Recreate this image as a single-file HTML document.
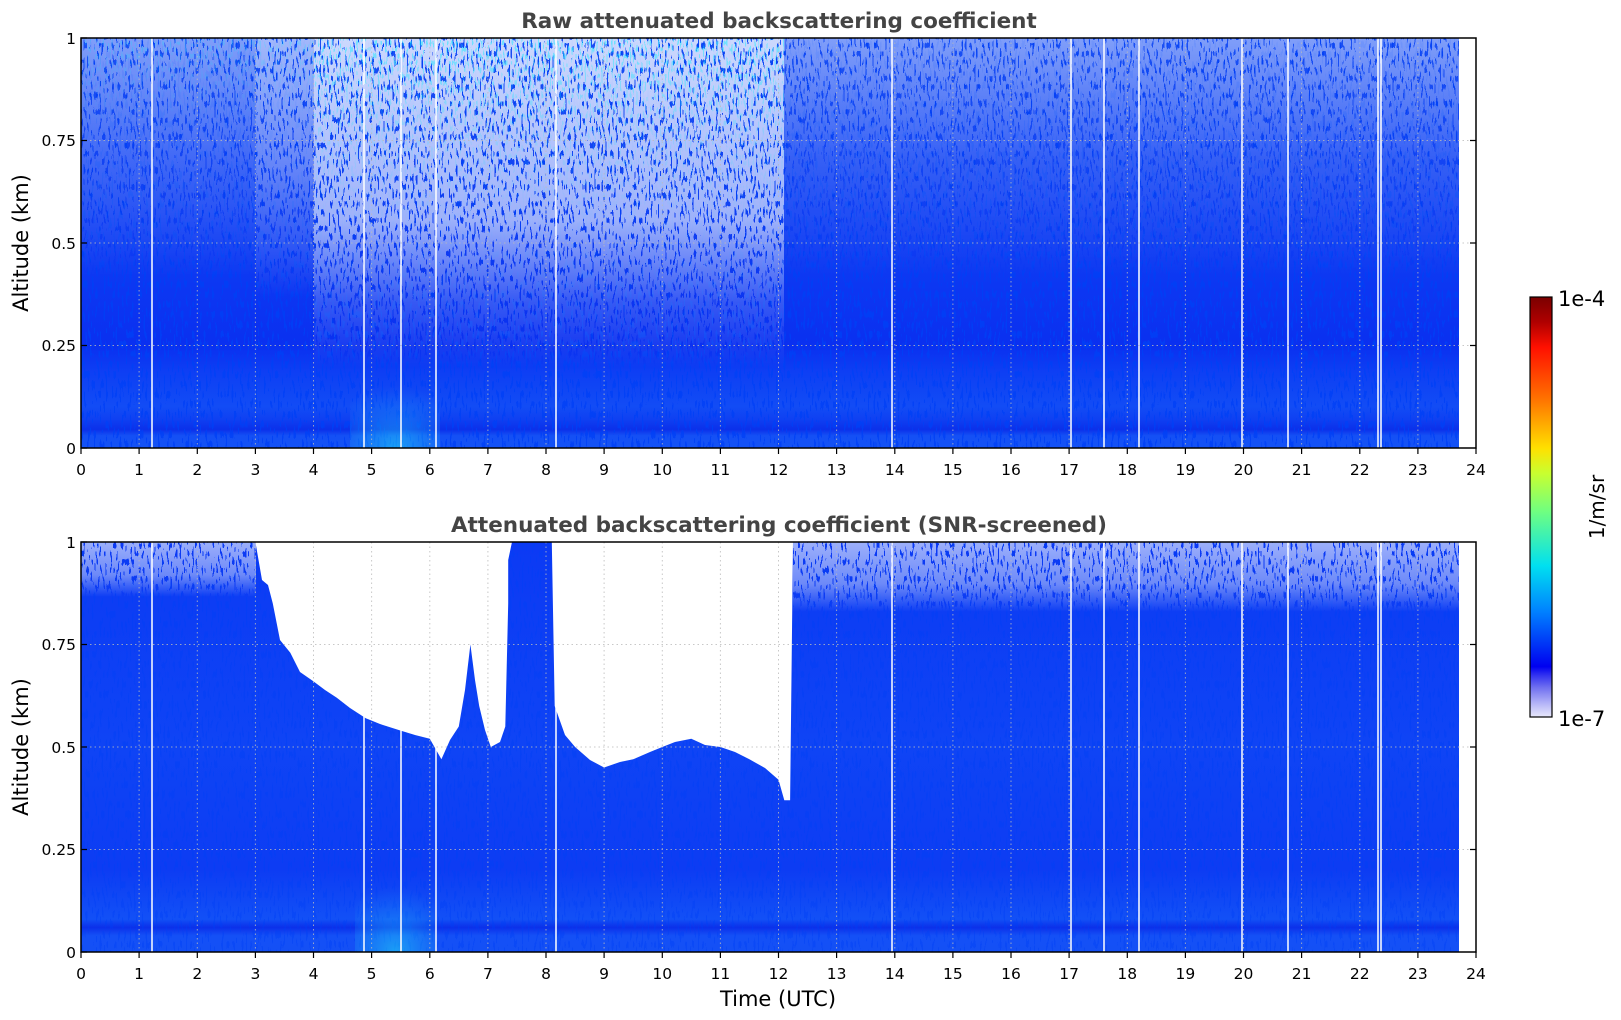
<!DOCTYPE html>
<html><head><meta charset="utf-8"><style>html,body{margin:0;padding:0;background:#fff;width:1621px;height:1020px;overflow:hidden}</style></head><body>
<svg width="1621" height="1020" viewBox="0 0 1621 1020" xmlns="http://www.w3.org/2000/svg" font-family="'DejaVu Sans','Liberation Sans',sans-serif">
<defs>
<filter id="n" x="0" y="0" width="100%" height="100%" filterUnits="objectBoundingBox">
<feTurbulence type="fractalNoise" baseFrequency="0.55 0.12" numOctaves="1" seed="7"/>
<feColorMatrix type="matrix" values="0 0 0 0 1  0 0 0 0 1  0 0 0 0 1  1 0 0 0 0"/>
<feComponentTransfer><feFuncA type="discrete" tableValues="0 0 1 1 1"/></feComponentTransfer>
</filter>
<filter id="n2" x="0" y="0" width="100%" height="100%" filterUnits="objectBoundingBox">
<feTurbulence type="fractalNoise" baseFrequency="0.6 0.15" numOctaves="1" seed="3"/>
<feColorMatrix type="matrix" values="0 0 0 0 0  0 0 0 0 0.85  0 0 0 0 1  1 0 0 0 0"/>
<feComponentTransfer><feFuncA type="discrete" tableValues="0 0 0 1 1"/></feComponentTransfer>
</filter>
<filter id="n3" x="0" y="0" width="100%" height="100%" filterUnits="objectBoundingBox">
<feTurbulence type="fractalNoise" baseFrequency="0.5 0.1" numOctaves="1" seed="11"/>
<feColorMatrix type="matrix" values="0 0 0 0 0  0 0 0 0 0.05  0 0 0 0 0.92  1 0 0 0 0"/>
<feComponentTransfer><feFuncA type="discrete" tableValues="0 0 0 0.8 0.8"/></feComponentTransfer>
</filter>
<linearGradient id="baseT" x1="0" y1="0" x2="0" y2="1">
<stop offset="0" stop-color="#1a50f4"/><stop offset="0.5" stop-color="#0e3cf3"/><stop offset="0.75" stop-color="#0a30f0"/><stop offset="0.82" stop-color="#0e40f4"/><stop offset="0.9" stop-color="#124cf5"/><stop offset="0.93" stop-color="#0f40f2"/><stop offset="0.955" stop-color="#0b30ea"/><stop offset="0.97" stop-color="#1450f5"/><stop offset="1" stop-color="#1452f5"/>
</linearGradient>
<linearGradient id="baseB" x1="0" y1="0" x2="0" y2="1">
<stop offset="0" stop-color="#0c3af4"/><stop offset="0.5" stop-color="#0f44f5"/><stop offset="0.8" stop-color="#0d3cf3"/><stop offset="0.92" stop-color="#1250f6"/><stop offset="0.94" stop-color="#0b30ea"/><stop offset="0.96" stop-color="#1450f6"/><stop offset="1" stop-color="#1450f5"/>
</linearGradient>
<linearGradient id="g1" x1="0" y1="0" x2="0" y2="1"><stop offset="0" stop-color="#fff" stop-opacity="0.45"/><stop offset="0.5" stop-color="#fff" stop-opacity="0.2"/><stop offset="1" stop-color="#fff" stop-opacity="0"/></linearGradient>
<linearGradient id="g1b" x1="0" y1="0" x2="0" y2="1"><stop offset="0" stop-color="#fff" stop-opacity="0.6"/><stop offset="0.5" stop-color="#fff" stop-opacity="0.35"/><stop offset="1" stop-color="#fff" stop-opacity="0"/></linearGradient>
<linearGradient id="g2" x1="0" y1="0" x2="0" y2="1"><stop offset="0" stop-color="#fff" stop-opacity="0.78"/><stop offset="0.55" stop-color="#fff" stop-opacity="0.6"/><stop offset="0.8" stop-color="#fff" stop-opacity="0.18"/><stop offset="1" stop-color="#fff" stop-opacity="0"/></linearGradient>
<linearGradient id="g3" x1="0" y1="0" x2="0" y2="1"><stop offset="0" stop-color="#fff" stop-opacity="0.45"/><stop offset="0.5" stop-color="#fff" stop-opacity="0.15"/><stop offset="1" stop-color="#fff" stop-opacity="0"/></linearGradient>
<mask id="m1" maskUnits="userSpaceOnUse" x="0" y="0" width="1621" height="1020">
<rect x="81" y="38" width="175" height="240" fill="url(#g1)"/>
<rect x="256" y="38" width="58" height="260" fill="url(#g1b)"/>
<rect x="314" y="38" width="470" height="330" fill="url(#g2)"/>
<rect x="784" y="38" width="675" height="240" fill="url(#g3)"/>
</mask>
<mask id="mcy" maskUnits="userSpaceOnUse" x="0" y="0" width="1621" height="1020">
<rect x="314" y="38" width="470" height="200" fill="url(#g3)"/>
<rect x="81" y="38" width="233" height="100" fill="url(#g3)" opacity="0.5"/>
</mask>
<linearGradient id="bt" x1="0" y1="0" x2="0" y2="1"><stop offset="0" stop-color="#fff" stop-opacity="0.6"/><stop offset="0.6" stop-color="#fff" stop-opacity="0.4"/><stop offset="1" stop-color="#fff" stop-opacity="0"/></linearGradient>
<mask id="m3" maskUnits="userSpaceOnUse" x="0" y="0" width="1621" height="1020">
<rect x="81" y="542" width="175" height="55" fill="url(#bt)"/>
<rect x="793" y="542" width="666" height="70" fill="url(#bt)"/>
</mask>
<radialGradient id="cy" cx="0.5" cy="1" r="0.8"><stop offset="0" stop-color="#20e0f8" stop-opacity="0.55"/><stop offset="1" stop-color="#20a0f8" stop-opacity="0"/></radialGradient>
<linearGradient id="cb" x1="0" y1="0" x2="0" y2="1">
<stop offset="0" stop-color="#7a0000"/><stop offset="0.06" stop-color="#b00000"/><stop offset="0.12" stop-color="#ff1000"/><stop offset="0.24" stop-color="#ff7000"/><stop offset="0.36" stop-color="#ffe000"/><stop offset="0.42" stop-color="#c8ff30"/><stop offset="0.51" stop-color="#70ff80"/><stop offset="0.64" stop-color="#00e0f0"/><stop offset="0.75" stop-color="#0080ff"/><stop offset="0.88" stop-color="#0000f0"/><stop offset="0.9" stop-color="#3030f0"/><stop offset="0.93" stop-color="#7070f0"/><stop offset="0.97" stop-color="#b8b8f8"/><stop offset="1" stop-color="#e8e8fa"/>
</linearGradient>
</defs>

<!-- TOP PLOT -->
<text x="779" y="28" text-anchor="middle" font-size="21.5" font-weight="bold" fill="#444">Raw attenuated backscattering coefficient</text>
<rect x="81" y="38" width="1378" height="410" fill="url(#baseT)"/>
<rect x="81" y="38" width="1378" height="410" fill="#fff" filter="url(#n3)"/>
<rect x="350" y="370" width="90" height="78" fill="url(#cy)"/>
<rect x="81" y="38" width="1378" height="330" fill="#fff" filter="url(#n)" mask="url(#m1)"/>
<rect x="81" y="38" width="1378" height="200" fill="#fff" filter="url(#n2)" mask="url(#mcy)"/>
<g stroke="#fff" stroke-width="1.5">
<line x1="152" y1="38" x2="152" y2="448"/><line x1="364" y1="38" x2="364" y2="448"/><line x1="401" y1="38" x2="401" y2="448"/><line x1="436" y1="38" x2="436" y2="448"/><line x1="556" y1="38" x2="556" y2="448"/><line x1="892" y1="38" x2="892" y2="448"/><line x1="1071" y1="38" x2="1071" y2="448"/><line x1="1104" y1="38" x2="1104" y2="448"/><line x1="1139" y1="38" x2="1139" y2="448"/><line x1="1242" y1="38" x2="1242" y2="448"/><line x1="1288" y1="38" x2="1288" y2="448"/><line x1="1378" y1="38" x2="1378" y2="448"/><line x1="1381" y1="38" x2="1381" y2="448"/>
</g>
<g stroke="#bbb" stroke-width="1" stroke-dasharray="1.5,3" opacity="0.8">
<line x1="81" y1="140.5" x2="1476" y2="140.5"/><line x1="81" y1="243" x2="1476" y2="243"/><line x1="81" y1="345.5" x2="1476" y2="345.5"/>
<path d="M139.1 38V448M197.3 38V448M255.4 38V448M313.5 38V448M371.6 38V448M429.8 38V448M487.9 38V448M546 38V448M604.1 38V448M662.3 38V448M720.4 38V448M778.5 38V448M836.6 38V448M894.8 38V448M952.9 38V448M1011 38V448M1069.1 38V448M1127.3 38V448M1185.4 38V448M1243.5 38V448M1301.6 38V448M1359.8 38V448M1417.9 38V448"/>
</g>
<rect x="81" y="38" width="1395" height="410" fill="none" stroke="#000" stroke-width="1.5"/>
<g stroke="#000" stroke-width="1.2">
<path d="M81 448v6M139.1 448v6M197.3 448v6M255.4 448v6M313.5 448v6M371.6 448v6M429.8 448v6M487.9 448v6M546 448v6M604.1 448v6M662.3 448v6M720.4 448v6M778.5 448v6M836.6 448v6M894.8 448v6M952.9 448v6M1011 448v6M1069.1 448v6M1127.3 448v6M1185.4 448v6M1243.5 448v6M1301.6 448v6M1359.8 448v6M1417.9 448v6M1476 448v6"/>
<path d="M81 38h6M81 140.5h6M81 243h6M81 345.5h6M81 448h6M1476 140.5h-6M1476 243h-6M1476 345.5h-6"/>
</g>
<g font-size="15.5" fill="#000" text-anchor="end">
<text x="76" y="44">1</text><text x="76" y="146">0.75</text><text x="76" y="249">0.5</text><text x="76" y="351">0.25</text><text x="76" y="454">0</text>
</g>
<g font-size="15.5" fill="#000" text-anchor="middle">
<text x="81" y="475">0</text><text x="139.1" y="475">1</text><text x="197.3" y="475">2</text><text x="255.4" y="475">3</text><text x="313.5" y="475">4</text><text x="371.6" y="475">5</text><text x="429.8" y="475">6</text><text x="487.9" y="475">7</text><text x="546" y="475">8</text><text x="604.1" y="475">9</text><text x="662.3" y="475">10</text><text x="720.4" y="475">11</text><text x="778.5" y="475">12</text><text x="836.6" y="475">13</text><text x="894.8" y="475">14</text><text x="952.9" y="475">15</text><text x="1011" y="475">16</text><text x="1069.1" y="475">17</text><text x="1127.3" y="475">18</text><text x="1185.4" y="475">19</text><text x="1243.5" y="475">20</text><text x="1301.6" y="475">21</text><text x="1359.8" y="475">22</text><text x="1417.9" y="475">23</text><text x="1476" y="475">24</text>
</g>
<text transform="translate(28,243) rotate(-90)" text-anchor="middle" font-size="21" fill="#000">Altitude (km)</text>

<!-- BOTTOM PLOT -->
<text x="779" y="532" text-anchor="middle" font-size="21.5" font-weight="bold" fill="#444">Attenuated backscattering coefficient (SNR-screened)</text>
<rect x="81" y="542" width="1378" height="410" fill="url(#baseB)"/>
<rect x="81" y="542" width="1378" height="410" fill="#fff" filter="url(#n3)" opacity="0.5"/>
<rect x="355" y="870" width="80" height="82" fill="url(#cy)"/>
<rect x="81" y="542" width="1378" height="70" fill="#fff" filter="url(#n)" mask="url(#m3)"/>
<path fill="#fff" d="M255.4 542L262 580L268 585L272.8 603.5L280 640L290.3 652.7L300 672L313.5 681.4L325 690L336.8 697.8L350 708L365.8 718.3L380 724L400.7 730.6L415 735L429.8 738.8L441.4 759.3L450 740L458.8 726.5L465 690L470.4 644.5L475 680L479.2 706L485 730L490.8 747L500 742L505.3 726.5L508.2 603.5L508.2 560L512 542Z"/>
<path fill="#fff" d="M551.8 542L554.7 706L565 735L575.1 747L590 760L604.1 767.5L620 762L633.2 759.3L650 752L662.3 747L675 742L691.3 738.8L705 745L720.4 747L735 752L749.4 759.3L765 768L778.5 779.8L784.3 800.3L790.1 800.3L793 542Z"/>
<rect x="1459" y="542" width="17" height="410" fill="#fff"/>
<g stroke="#fff" stroke-width="1.5">
<line x1="152" y1="542" x2="152" y2="952"/><line x1="364" y1="542" x2="364" y2="952"/><line x1="401" y1="542" x2="401" y2="952"/><line x1="436" y1="542" x2="436" y2="952"/><line x1="556" y1="542" x2="556" y2="952"/><line x1="892" y1="542" x2="892" y2="952"/><line x1="1071" y1="542" x2="1071" y2="952"/><line x1="1104" y1="542" x2="1104" y2="952"/><line x1="1139" y1="542" x2="1139" y2="952"/><line x1="1242" y1="542" x2="1242" y2="952"/><line x1="1288" y1="542" x2="1288" y2="952"/><line x1="1378" y1="542" x2="1378" y2="952"/><line x1="1381" y1="542" x2="1381" y2="952"/>
</g>
<g stroke="#bbb" stroke-width="1" stroke-dasharray="1.5,3" opacity="0.8">
<line x1="81" y1="644.5" x2="1476" y2="644.5"/><line x1="81" y1="747" x2="1476" y2="747"/><line x1="81" y1="849.5" x2="1476" y2="849.5"/>
<path d="M139.1 542V952M197.3 542V952M255.4 542V952M313.5 542V952M371.6 542V952M429.8 542V952M487.9 542V952M546 542V952M604.1 542V952M662.3 542V952M720.4 542V952M778.5 542V952M836.6 542V952M894.8 542V952M952.9 542V952M1011 542V952M1069.1 542V952M1127.3 542V952M1185.4 542V952M1243.5 542V952M1301.6 542V952M1359.8 542V952M1417.9 542V952"/>
</g>
<rect x="81" y="542" width="1395" height="410" fill="none" stroke="#000" stroke-width="1.5"/>
<g stroke="#000" stroke-width="1.2">
<path d="M81 952v6M139.1 952v6M197.3 952v6M255.4 952v6M313.5 952v6M371.6 952v6M429.8 952v6M487.9 952v6M546 952v6M604.1 952v6M662.3 952v6M720.4 952v6M778.5 952v6M836.6 952v6M894.8 952v6M952.9 952v6M1011 952v6M1069.1 952v6M1127.3 952v6M1185.4 952v6M1243.5 952v6M1301.6 952v6M1359.8 952v6M1417.9 952v6M1476 952v6"/>
<path d="M81 542h6M81 644.5h6M81 747h6M81 849.5h6M81 952h6M1476 644.5h-6M1476 747h-6M1476 849.5h-6"/>
</g>
<g font-size="15.5" fill="#000" text-anchor="end">
<text x="76" y="548">1</text><text x="76" y="650">0.75</text><text x="76" y="753">0.5</text><text x="76" y="855">0.25</text><text x="76" y="958">0</text>
</g>
<g font-size="15.5" fill="#000" text-anchor="middle">
<text x="81" y="979">0</text><text x="139.1" y="979">1</text><text x="197.3" y="979">2</text><text x="255.4" y="979">3</text><text x="313.5" y="979">4</text><text x="371.6" y="979">5</text><text x="429.8" y="979">6</text><text x="487.9" y="979">7</text><text x="546" y="979">8</text><text x="604.1" y="979">9</text><text x="662.3" y="979">10</text><text x="720.4" y="979">11</text><text x="778.5" y="979">12</text><text x="836.6" y="979">13</text><text x="894.8" y="979">14</text><text x="952.9" y="979">15</text><text x="1011" y="979">16</text><text x="1069.1" y="979">17</text><text x="1127.3" y="979">18</text><text x="1185.4" y="979">19</text><text x="1243.5" y="979">20</text><text x="1301.6" y="979">21</text><text x="1359.8" y="979">22</text><text x="1417.9" y="979">23</text><text x="1476" y="979">24</text>
</g>
<text transform="translate(28,747) rotate(-90)" text-anchor="middle" font-size="21" fill="#000">Altitude (km)</text>
<text x="778" y="1006" text-anchor="middle" font-size="21" fill="#000">Time (UTC)</text>

<!-- COLORBAR -->
<rect x="1530" y="297" width="22" height="420" fill="url(#cb)" stroke="#000" stroke-width="1.2"/>
<text x="1558" y="306" font-size="21" fill="#000">1e-4</text>
<text x="1558" y="726" font-size="21" fill="#000">1e-7</text>
<text transform="translate(1604,507) rotate(-90)" text-anchor="middle" font-size="20" fill="#000">1/m/sr</text>
</svg>
</body></html>
